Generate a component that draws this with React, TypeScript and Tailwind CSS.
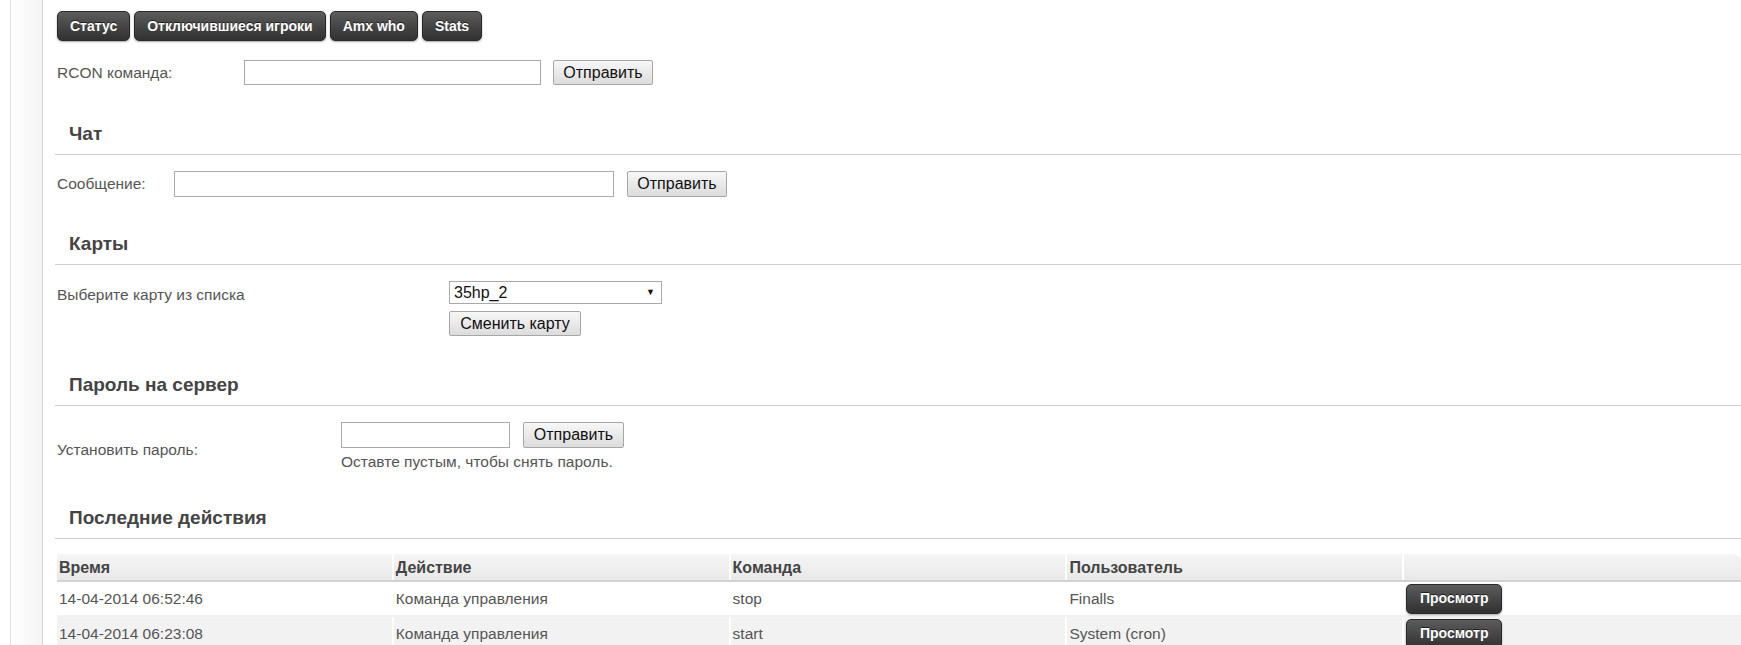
import React from "react";

const darkBtn =
  "h-[30px] rounded-[5px] border border-[#2a2a2a] bg-gradient-to-b from-[#5c5c5c] to-[#313131] px-[12px] text-[14px] font-bold text-white shadow-[0_1px_2px_rgba(0,0,0,0.35)] [text-shadow:0_-1px_0_rgba(0,0,0,0.6)]";

const greyBtn =
  "h-[25px] rounded-[2px] border border-[#a6a6a6] bg-gradient-to-b from-[#f7f7f7] to-[#dcdcdc] px-[8px] text-[16px] leading-[20px] text-[#111]";

const input = "h-[25px] border border-[#a9a9a9] bg-white";

function Heading({ children, mt }: { children: React.ReactNode; mt: string }) {
  return (
    <div className={`${mt} ml-[12px] border-b border-[#d0d0d0] pb-[9px] pl-[14px]`}>
      <h3 className="text-[19px] font-bold leading-[22px] text-[#444]">{children}</h3>
    </div>
  );
}

const rows = [
  { time: "14-04-2014 06:52:46", action: "Команда управления", cmd: "stop", user: "Finalls" },
  { time: "14-04-2014 06:23:08", action: "Команда управления", cmd: "start", user: "System (cron)" },
];

export default function App() {
  return (
    <div className="flex min-h-[645px] w-full overflow-hidden bg-white font-['Liberation_Sans',Arial,sans-serif] text-[15.5px] text-[#555]">
      {/* левая полоса */}
      <div className="flex w-[43px] shrink-0">
        <div className="w-[10px] bg-white" />
        <div className="w-[1px] bg-[#e2e2e2]" />
        <div className="w-[31px] bg-gradient-to-r from-white to-[#f4f4f4]" />
        <div className="w-[1px] bg-[#d4d4d4]" />
      </div>

      <div className="min-w-0 flex-1 pt-[11px]">
        {/* вкладки */}
        <div className="flex gap-[4px] pl-[14px]">
          <button className={darkBtn}>Статус</button>
          <button className={darkBtn}>Отключившиеся игроки</button>
          <button className={darkBtn}>Amx who</button>
          <button className={darkBtn}>Stats</button>
        </div>

        {/* RCON */}
        <div className="mt-[19px] flex items-center pl-[14px]">
          <span className="w-[187px]">RCON команда:</span>
          <input className={`${input} w-[297px]`} />
          <button className={`${greyBtn} ml-[12px] w-[100px]`}>Отправить</button>
        </div>

        <Heading mt="mt-[38px]">Чат</Heading>
        <div className="mt-[16px] flex items-center pl-[14px]">
          <span className="w-[117px]">Сообщение:</span>
          <input className={`${input} h-[26px] w-[440px]`} />
          <button className={`${greyBtn} ml-[13px] h-[26px] w-[100px]`}>Отправить</button>
        </div>

        <Heading mt="mt-[36px]">Карты</Heading>
        <div className="mt-[16px] flex pl-[14px]">
          <span className="mt-[2px] w-[392px]">Выберите карту из списка</span>
          <div className="flex flex-col items-start gap-[7px]">
            <div className="flex h-[23px] w-[213px] items-center justify-between border border-[#a9a9a9] bg-white pl-[4px] pr-[6px] text-[16px] text-[#111]">
              <span>35hp_2</span>
              <span className="text-[9px]">▼</span>
            </div>
            <button className={`${greyBtn} w-[132px]`}>Сменить карту</button>
          </div>
        </div>

        <Heading mt="mt-[38px]">Пароль на сервер</Heading>
        <div className="mt-[16px] flex items-center pl-[14px]">
          <span className="mt-[8px] w-[284px]">Установить пароль:</span>
          <div className="flex flex-col">
            <div className="flex items-center">
              <input className={`${input} h-[26px] w-[169px]`} />
              <button className={`${greyBtn} ml-[13px] h-[26px] w-[101px]`}>Отправить</button>
            </div>
            <span className="mt-[5px] leading-[17px]">Оставте пустым, чтобы снять пароль.</span>
          </div>
        </div>

        <Heading mt="mt-[37px]">Последние действия</Heading>
        <div className="mt-[15px] pl-[14px]">
          <div className="grid grid-cols-5 rounded-tr-[8px] border-b-2 border-[#d2d2d2] bg-gradient-to-b from-[#f5f5f5] to-[#e9e9e9] text-[16px] font-bold text-[#444]">
            {["Время", "Действие", "Команда", "Пользователь", ""].map((h, i) => (
              <div key={i} className={`h-[26px] pl-[2px] leading-[27px] ${i < 4 ? "border-r-2 border-white" : ""}`}>
                {h}
              </div>
            ))}
          </div>
          {rows.map((r, i) => (
            <div
              key={i}
              className={`grid grid-cols-5 border-b-2 border-[#f0f0f0] ${i % 2 ? "bg-[#f2f2f2]" : "bg-white"}`}
            >
              {[r.time, r.action, r.cmd, r.user].map((c, j) => (
                <div key={j} className="flex h-[33px] items-center border-r-2 border-white pl-[2px]">
                  {c}
                </div>
              ))}
              <div className="flex h-[33px] items-center pl-[2px]">
                <button className={`${darkBtn} h-[29px] w-[96px] px-0`}>Просмотр</button>
              </div>
            </div>
          ))}
        </div>
      </div>
    </div>
  );
}
